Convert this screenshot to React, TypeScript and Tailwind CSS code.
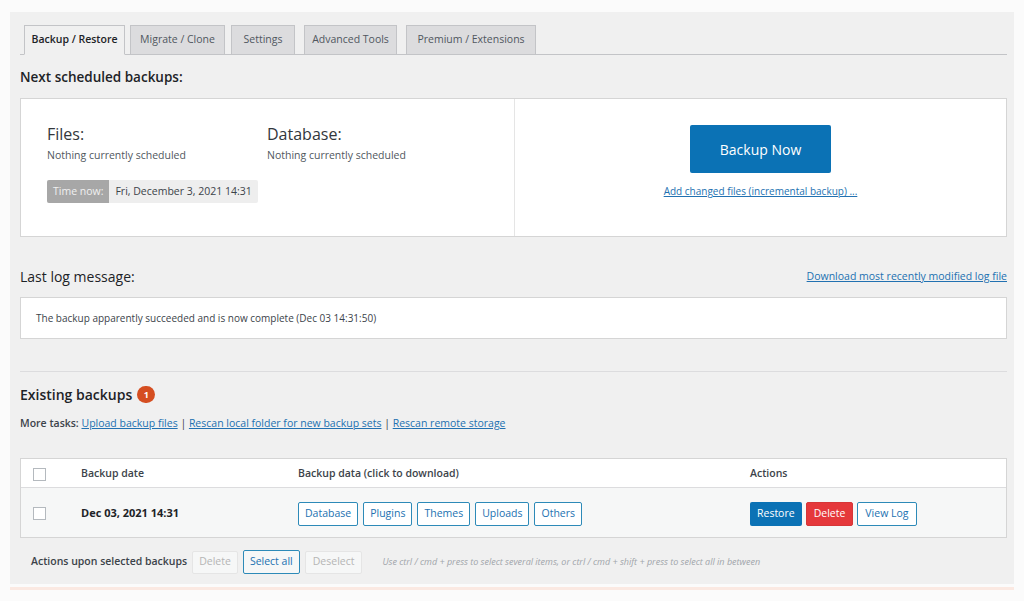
export default function App() {
  const tabs = [
    { label: 'Backup / Restore', w: 'w-[101px]', ml: 'ml-0' },
    { label: 'Migrate / Clone', w: 'w-[95px]', ml: 'ml-[5px]' },
    { label: 'Settings', w: 'w-[64px]', ml: 'ml-[6px]' },
    { label: 'Advanced Tools', w: 'w-[93px]', ml: 'ml-[9px]' },
    { label: 'Premium / Extensions', w: 'w-[130px]', ml: 'ml-[9px]' },
  ];
  const dataButtons = ['Database', 'Plugins', 'Themes', 'Uploads', 'Others'];

  return (
    <div className="min-h-[601px] bg-[#fbfbfb] px-[10px] pt-[12px] font-['Open_Sans',sans-serif] text-[#3c434a]">
      <div className="bg-[#f0f0f0] pl-[10px] pr-[7px] pt-[13px] pb-[10px]">
        {/* tabs */}
        <div className="flex items-end border-b border-[#c3c4c7] pl-[4px]">
          {tabs.map((t, i) => (
            <div
              key={t.label}
              className={
                i === 0
                  ? `${t.w} ${t.ml} -mb-px flex h-[30px] items-center justify-center border border-[#c3c4c7] border-b-[#f0f0f0] bg-[#f0f0f0] text-[10.5px] font-semibold text-[#1d2327]`
                  : `${t.w} ${t.ml} flex h-[29px] items-center justify-center border border-[#c3c4c7] border-b-0 bg-[#dcdcde] text-[10.5px] text-[#50575e]`
              }
            >
              {t.label}
            </div>
          ))}
        </div>

        <h2 className="mt-[12px] text-[13.5px] font-semibold text-[#1d2327]">Next scheduled backups:</h2>

        <div className="mt-[11px] flex h-[139px] border border-[#d5d5d5] bg-white">
          <div className="w-[494px] border-r border-[#e5e5e5] pl-[26px] pt-[25px]">
            <div className="flex">
              <div className="w-[220px]">
                <div className="text-[16px] font-medium leading-[20px] text-[#32373c]">Files:</div>
                <div className="mt-[4px] text-[10.5px] text-[#50575e]">Nothing currently scheduled</div>
              </div>
              <div>
                <div className="text-[16px] font-medium leading-[20px] text-[#32373c]">Database:</div>
                <div className="mt-[4px] text-[10.5px] text-[#50575e]">Nothing currently scheduled</div>
              </div>
            </div>
            <div className="mt-[16px] inline-flex h-[23px] items-center overflow-hidden rounded-[2px] bg-[#eeeeee] text-[10.5px]">
              <span className="flex h-full items-center bg-[#a7a7a7] px-[6px] text-[#f0f0f0]">Time now:</span>
              <span className="px-[6px] text-[#3c434a]">Fri, December 3, 2021 14:31</span>
            </div>
          </div>
          <div className="flex flex-1 flex-col items-center pt-[26px]">
            <button className="h-[48px] w-[141px] rounded-[2px] bg-[#0b72b5] text-[14px] text-white">Backup Now</button>
            <a className="mt-[11px] text-[10px] text-[#2271b1] underline">Add changed files (incremental backup) ...</a>
          </div>
        </div>

        <div className="mt-[29px] flex items-center justify-between">
          <h2 className="text-[14px] font-medium text-[#1d2327]">Last log message:</h2>
          <a className="text-[10.5px] text-[#2271b1] underline">Download most recently modified log file</a>
        </div>

        <div className="mt-[10px] flex h-[42px] items-center border border-[#d5d5d5] bg-white pl-[15px] text-[10px] text-[#3c434a]">
          The backup apparently succeeded and is now complete (Dec 03 14:31:50)
        </div>

        <div className="mt-[32px] border-t border-[#dcdcde]" />

        <div className="mt-[12px] flex items-center gap-[5px]">
          <h2 className="text-[14px] font-semibold text-[#1d2327]">Existing backups</h2>
          <span className="flex h-[17px] w-[18px] items-center justify-center rounded-full bg-[#d54e21] text-[9px] font-bold text-white">1</span>
        </div>

        <div className="mt-[11px] text-[10.5px] text-[#3c434a]">
          <span className="font-semibold">More tasks: </span>
          <a className="text-[#2271b1] underline">Upload backup files</a> |{' '}
          <a className="text-[#2271b1] underline">Rescan local folder for new backup sets</a> |{' '}
          <a className="text-[#2271b1] underline">Rescan remote storage</a>
        </div>

        <div className="mt-[26px] border border-[#d5d5d5]">
          <div className="flex h-[29px] items-center border-b border-[#dcdcde] bg-white pt-[2px] text-[10.5px] font-semibold text-[#3c434a]">
            <div className="w-[60px] pl-[12px]">
              <div className="h-[13px] w-[13px] border border-[#b4b9be] bg-white" />
            </div>
            <div className="w-[217px]">Backup date</div>
            <div className="w-[452px]">Backup data (click to download)</div>
            <div>Actions</div>
          </div>
          <div className="flex h-[49px] items-center bg-[#f6f7f7] pt-[2px] text-[10.5px]">
            <div className="w-[60px] pl-[12px]">
              <div className="h-[13px] w-[13px] border border-[#b4b9be] bg-white" />
            </div>
            <div className="w-[217px] text-[11px] font-bold text-[#1d2327]">Dec 03, 2021 14:31</div>
            <div className="flex w-[452px] gap-[5px]">
              {dataButtons.map((b) => (
                <button key={b} className="h-[24px] rounded-[2px] border border-[#2d8ab8] bg-white px-[6px] text-[10.5px] text-[#2271b1]">
                  {b}
                </button>
              ))}
            </div>
            <div className="flex gap-[4px]">
              <button className="h-[24px] rounded-[2px] bg-[#0b72b5] px-[7px] text-[10.5px] text-white">Restore</button>
              <button className="h-[24px] rounded-[2px] border border-[#d63638] bg-[#e5383b] px-[7px] text-[10.5px] text-white">Delete</button>
              <button className="h-[24px] rounded-[2px] border border-[#2d8ab8] bg-white px-[7px] text-[10.5px] text-[#2271b1]">View Log</button>
            </div>
          </div>
        </div>

        <div className="mt-[12px] flex items-center pl-[11px] text-[10.5px]">
          <span className="mr-[5px] font-semibold text-[#3c434a]">Actions upon selected backups</span>
          <button className="h-[23px] rounded-[2px] border border-[#e5e5e5] bg-[#f6f7f7] px-[6px] text-[#b5b5b5]">Delete</button>
          <button className="ml-[5px] h-[24px] rounded-[2px] border border-[#2d8ab8] bg-[#f6f7f7] px-[6px] text-[#2271b1]">Select all</button>
          <button className="ml-[5px] h-[23px] rounded-[2px] border border-[#e5e5e5] bg-[#f6f7f7] px-[7px] text-[#b5b5b5]">Deselect</button>
          <span className="ml-[20px] text-[9px] italic text-[#a0a5aa]">
            Use ctrl / cmd + press to select several items, or ctrl / cmd + shift + press to select all in between
          </span>
        </div>
      </div>
      <div className="mt-[3px] h-[3px] bg-[#fbe9e2]" />
    </div>
  );
}
